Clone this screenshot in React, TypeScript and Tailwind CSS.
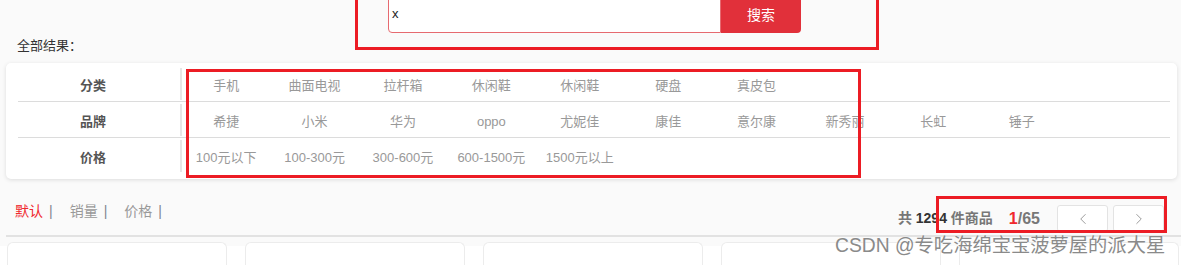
import { ChevronLeft, ChevronRight } from "lucide-react";

const filters = [
  { label: "分类", values: ["手机", "曲面电视", "拉杆箱", "休闲鞋", "休闲鞋", "硬盘", "真皮包"] },
  {
    label: "品牌",
    values: ["希捷", "小米", "华为", "oppo", "尤妮佳", "康佳", "意尔康", "新秀丽", "长虹", "锤子"],
  },
  { label: "价格", values: ["100元以下", "100-300元", "300-600元", "600-1500元", "1500元以上"] },
];

const sorts = ["默认", "销量", "价格"];

export default function App() {
  return (
    <div className="relative h-[265px] overflow-hidden bg-[#fafafa] font-['Liberation_Sans','Noto_Sans_CJK_SC',sans-serif] text-[#333]">
      {/* search */}
      <div className="ml-[388px] -mt-[6px] flex h-[39px]">
        <div className="flex w-[333px] items-center rounded-bl-[4px] border border-[#e66a70] bg-white pl-[3px] text-[13px] text-[#222]">
          x
        </div>
        <button className="w-[80px] rounded-br-[4px] bg-[#e1303a] pt-[4px] text-[14px] text-white">
          搜索
        </button>
      </div>

      <p className="ml-[17px] mt-[4px] text-[13px] leading-[18px] text-[#333]">全部结果：</p>

      {/* filter */}
      <div className="ml-[6px] mr-[4px] mt-[8px] rounded-[5px] bg-white pb-[5px] pl-[12px] pr-[7px] pt-[3px] shadow-[0_1px_4px_rgba(0,0,0,0.12)]">
        {filters.map((row, i) => (
          <div
            key={row.label}
            className={`flex h-[36px] items-center pt-[4px] ${i < filters.length - 1 ? "border-b border-[#dcdcdc]" : ""}`}
          >
            <div className="-mt-[4px] flex h-[32px] w-[164px] items-center justify-center border-r-2 border-[#e6e6e6] pr-[12px] pt-[4px] text-[13px] font-bold text-[#555]">
              {row.label}
            </div>
            {row.values.map((v, j) => (
              <span key={j} className="w-[88.4px] text-center text-[13px] text-[#999]">
                {v}
              </span>
            ))}
          </div>
        ))}
      </div>

      {/* sort + pager */}
      <div className="flex h-[56px] items-start justify-between pl-[15px] pr-[17px]">
        <div className="mt-[22px] flex text-[14px] leading-[20px]">
          {sorts.map((s, i) => (
            <span key={s} className="mr-[17px] flex">
              <span className={i === 0 ? "text-[#f0282d]" : "text-[#999]"}>{s}</span>
              <span className="ml-[6px] text-[#7f8590]">|</span>
            </span>
          ))}
        </div>
        <div className="mt-[26px] flex items-center text-[14px] font-bold">
          <span className="text-[#777]">
            共 <span className="text-[#333]">1294</span> 件商品
          </span>
          <span className="ml-[16px] text-[16px] text-[#777]">
            <span className="text-[#f0282d]">1</span>/65
          </span>
          <div className="ml-[17px] flex gap-[5px]">
            <button className="flex h-[27px] w-[51px] items-center justify-center rounded-[3px] border border-[#e3e3e3] bg-white">
              <ChevronLeft size={18} strokeWidth={1.3} className="text-[#999]" />
            </button>
            <button className="flex h-[27px] w-[51px] items-center justify-center rounded-[3px] border border-[#e3e3e3] bg-white">
              <ChevronRight size={18} strokeWidth={1.3} className="text-[#999]" />
            </button>
          </div>
        </div>
      </div>

      <div className="ml-[6px] border-t-2 border-[#e2e2e2]" />

      {/* goods cards */}
      <div className="mt-[5px] flex h-[40px] gap-[18px] bg-[linear-gradient(#fafafa_4px,#fff_4px)] pl-[7px]">
        {[0, 1, 2, 3, 4].map((k) => (
          <div key={k} className="w-[220px] shrink-0 rounded-t-[6px] border border-b-0 border-[#ececec] bg-white" />
        ))}
      </div>

      {/* annotation boxes */}
      <div className="absolute left-[355px] top-[-10px] h-[60px] w-[524px] border-[3px] border-[#ec1c24]" />
      <div className="absolute left-[186px] top-[69px] h-[109px] w-[675px] border-[3px] border-[#ec1c24]" />
      <div className="absolute left-[936px] top-[196px] h-[37px] w-[231px] border-[3px] border-[#ec1c24]" />

      {/* watermark */}
      <div className="absolute left-[835px] top-[234px] text-[19.3px] leading-[24px] text-[#8a8a8a] [text-shadow:0_0_2px_#fff]">
        CSDN @专吃海绵宝宝菠萝屋的派大星
      </div>
    </div>
  );
}
